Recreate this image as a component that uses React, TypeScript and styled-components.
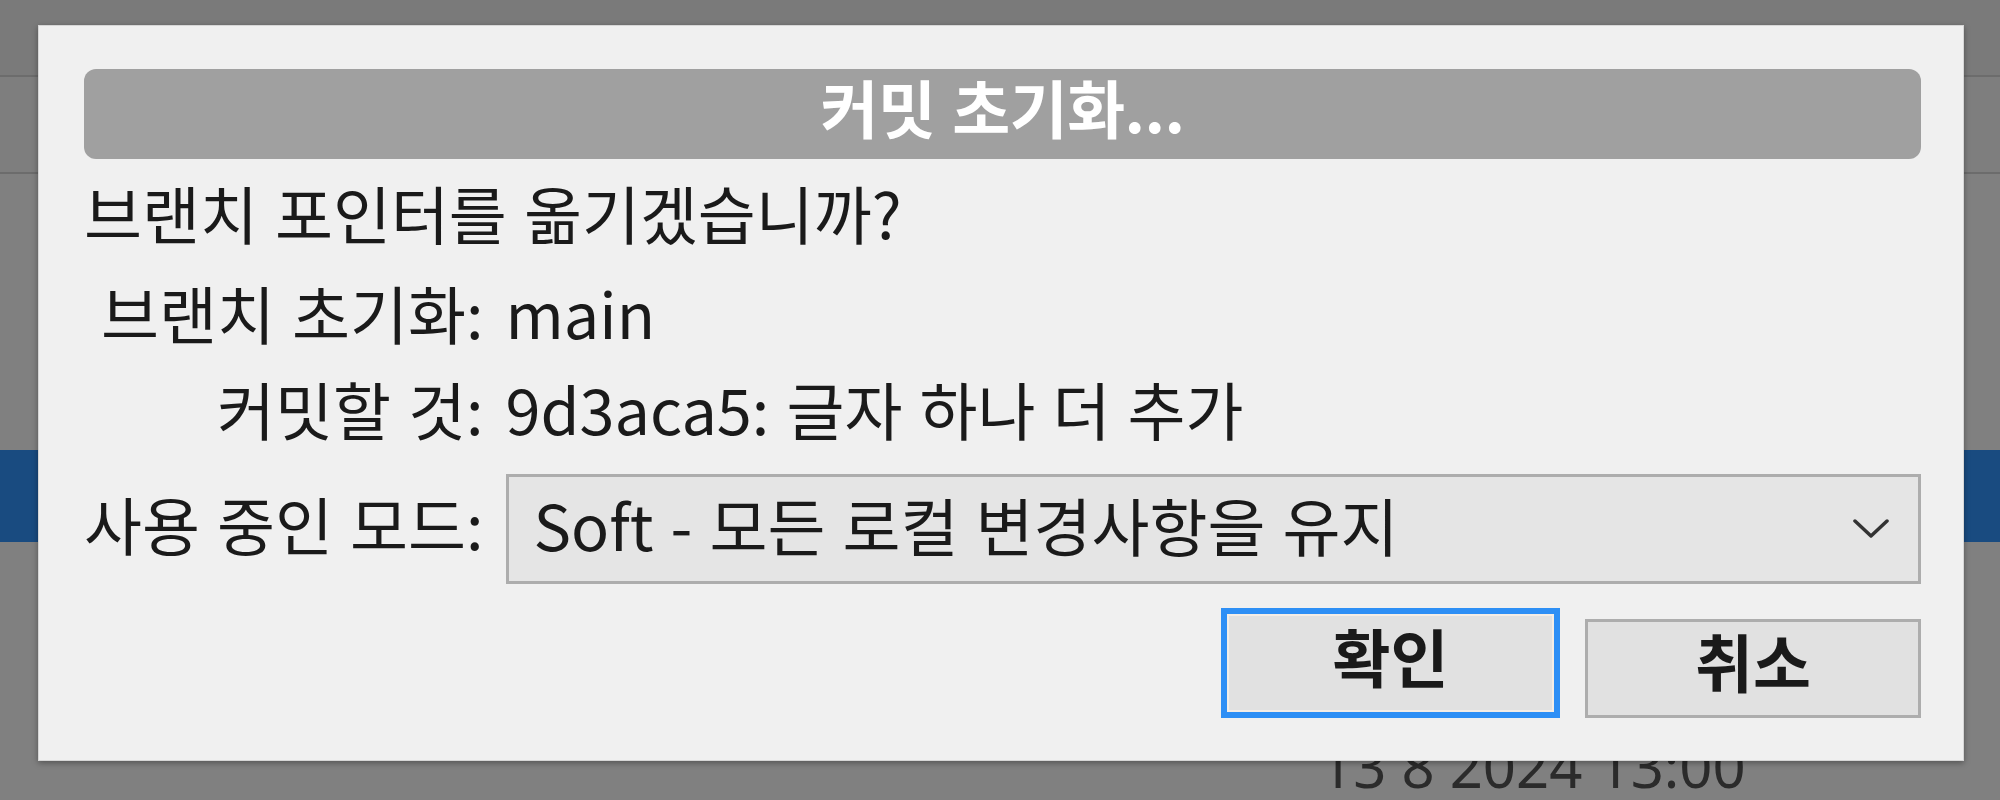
import React from "react";
import styled, { createGlobalStyle } from "styled-components";

const GlobalStyle = createGlobalStyle`
  html, body {
    margin: 0;
    padding: 0;
    width: 2000px;
    height: 800px;
    overflow: hidden;
    background: #808080;
  }
  #root {
    width: 2000px;
    height: 800px;
  }
`;

const FONT = `"Noto Sans CJK KR", "Noto Sans", sans-serif`;

const Screen = styled.div`
  position: relative;
  width: 2000px;
  height: 800px;
  overflow: hidden;
  background: #808080;
  font-family: ${FONT};
`;

/* ---------- dimmed application behind the modal ---------- */
const Toolbar = styled.div`
  height: 75px;
  background: #7a7a7a;
  border-bottom: 2px solid #6c6c6c;
`;

const HeaderBar = styled.div`
  height: 95px;
  background: #7e7e7e;
  border-bottom: 2px solid #6c6c6c;
`;

const List = styled.div`
  display: flex;
  flex-direction: column;
`;

const ListRow = styled.div<{ $selected?: boolean }>`
  height: 92px;
  display: flex;
  align-items: center;
  background: ${(p) => (p.$selected ? "#194b80" : "transparent")};
`;

const DateCell = styled.span`
  margin-left: 1320px;
  margin-bottom: 12px;
  font-family: "Noto Sans", sans-serif;
  font-size: 58px;
  line-height: 1;
  color: #2b2b2b;
  white-space: nowrap;
`;

/* ---------- modal dialog ---------- */
const Dialog = styled.div`
  position: absolute;
  left: 38px;
  top: 25px;
  width: 1926px;
  height: 736px;
  box-sizing: border-box;
  padding: 43px 42px 43px 45px;
  background: #f0f0f0;
  border: 1px solid #d6d6d6;
  box-shadow: 0 2px 6px rgba(0, 0, 0, 0.35);
  display: flex;
  flex-direction: column;
  color: #1a1a1a;
  font-size: 63px;
  word-spacing: 3px;
`;

const TitleBar = styled.div`
  height: 90px;
  box-sizing: border-box;
  padding-bottom: 18px;
  flex-shrink: 0;
  border-radius: 12px;
  background: #a0a0a0;
  color: #ffffff;
  font-weight: 700;
  letter-spacing: -0.5px;
  line-height: 1;
  display: flex;
  align-items: center;
  justify-content: center;
  white-space: nowrap;
`;

const Question = styled.div`
  margin-top: 5px;
  height: 96px;
  line-height: 96px;
  padding-bottom: 4px;
  white-space: nowrap;
`;

const FieldGrid = styled.div`
  display: grid;
  grid-template-columns: auto 1fr;
  grid-template-rows: 96px 96px 128px;
  column-gap: 22px;
`;

const Label = styled.div<{ $tall?: boolean }>`
  justify-self: end;
  align-self: ${(p) => (p.$tall ? "end" : "center")};
  line-height: ${(p) => (p.$tall ? "98px" : "96px")};
  padding-bottom: ${(p) => (p.$tall ? "12px" : "0")};
  white-space: nowrap;
`;

const Value = styled.div`
  align-self: center;
  line-height: 96px;
  white-space: nowrap;
`;

const Combo = styled.div`
  align-self: end;
  height: 110px;
  box-sizing: border-box;
  border: 3px solid #adadad;
  background: #e5e5e5;
  padding: 0 29px 0 25px;
  display: flex;
  align-items: center;
  justify-content: space-between;
  white-space: nowrap;
`;

const ComboText = styled.span`
  line-height: 1;
  padding-bottom: 12px;
`;

const Chevron = styled.svg`
  width: 36px;
  height: 20px;
  flex-shrink: 0;
`;

const ButtonRow = styled.div`
  margin-top: 24px;
  height: 110px;
  display: flex;
  justify-content: flex-end;
  align-items: flex-end;
  gap: 25px;
`;

const Button = styled.button<{ $focused?: boolean }>`
  box-sizing: border-box;
  width: ${(p) => (p.$focused ? "339px" : "336px")};
  height: ${(p) => (p.$focused ? "110px" : "99px")};
  margin: 0;
  padding: 0 0 18px 0;
  font-family: ${FONT};
  font-size: 63px;
  font-weight: 700;
  line-height: 1;
  color: #1a1a1a;
  background: #e1e1e1;
  border: ${(p) => (p.$focused ? "6px solid #2e8ff5" : "3px solid #adadad")};
  box-shadow: ${(p) => (p.$focused ? "inset 0 0 0 2px #f4ede6" : "none")};
  display: flex;
  align-items: center;
  justify-content: center;
  cursor: default;
`;

export default function App() {
  return (
    <Screen>
      <GlobalStyle />
      <Toolbar />
      <HeaderBar />
      <List>
        <ListRow />
        <ListRow />
        <ListRow />
        <ListRow $selected />
        <ListRow />
        <ListRow />
        <ListRow>
          <DateCell>13 8 2024 13:00</DateCell>
        </ListRow>
      </List>

      <Dialog role="dialog" aria-label="커밋 초기화">
        <TitleBar>커밋 초기화...</TitleBar>
        <Question>브랜치 포인터를 옮기겠습니까?</Question>
        <FieldGrid>
          <Label>브랜치 초기화:</Label>
          <Value>main</Value>
          <Label>커밋할 것:</Label>
          <Value>9d3aca5: 글자 하나 더 추가</Value>
          <Label $tall>사용 중인 모드:</Label>
          <Combo>
            <ComboText>Soft - 모든 로컬 변경사항을 유지</ComboText>
            <Chevron viewBox="0 0 36 20">
              <polyline
                points="2,2 18,17 34,2"
                fill="none"
                stroke="#333333"
                strokeWidth="3.5"
                strokeLinecap="round"
                strokeLinejoin="round"
              />
            </Chevron>
          </Combo>
        </FieldGrid>
        <ButtonRow>
          <Button $focused>확인</Button>
          <Button>취소</Button>
        </ButtonRow>
      </Dialog>
    </Screen>
  );
}
